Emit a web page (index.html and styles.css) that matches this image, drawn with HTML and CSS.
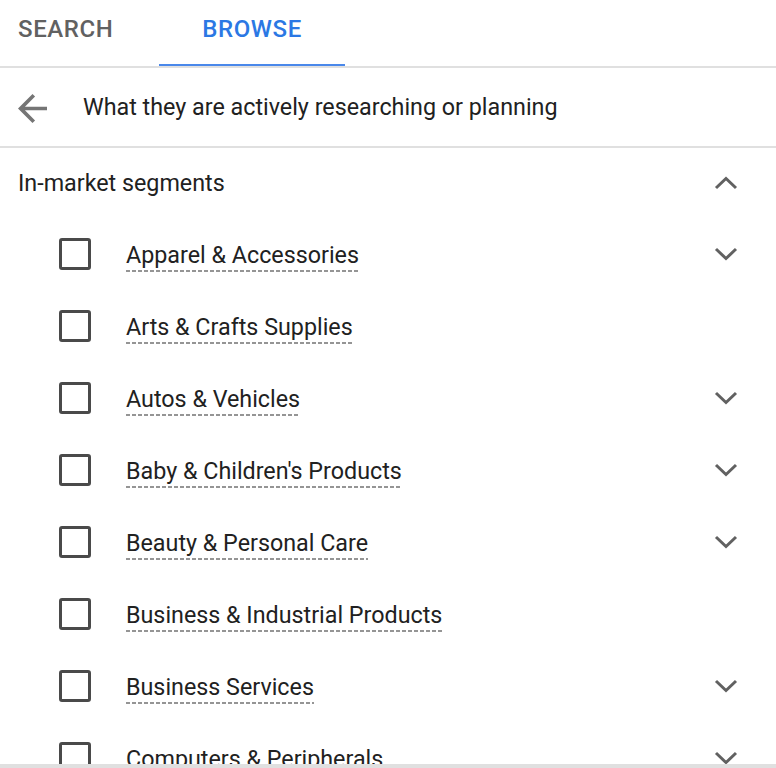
FILE: index.html
```html
<!DOCTYPE html>
<html>
<head>
<meta charset="utf-8">
<link rel="stylesheet" href="styles.css">
</head>
<body>
<div class="tabs">
  <div class="tab">SEARCH</div>
  <div class="tab tab-active">BROWSE</div>
</div>
<div class="back-row">
  <svg class="back-icon" viewBox="4 4 16 16" width="29" height="29"><path d="M20 11H7.83l5.59-5.59L12 4l-8 8 8 8 1.41-1.41L7.83 13H20v-2z" fill="#757575"/></svg>
  <span class="back-text">What they are actively researching or planning</span>
</div>
<div class="section-head">
  <span>In-market segments</span>
  <svg class="chev" viewBox="0 0 24 14" width="24" height="14"><polyline points="2,12 12,2.5 22,12" fill="none" stroke="#616161" stroke-width="3"/></svg>
</div>
<ul class="list">
  <li class="item"><span class="box"></span><span class="label">Apparel &amp; Accessories</span><svg class="chev" viewBox="0 0 24 14" width="24" height="14"><polyline points="2,2 12,11.5 22,2" fill="none" stroke="#616161" stroke-width="3"/></svg></li>
  <li class="item"><span class="box"></span><span class="label">Arts &amp; Crafts Supplies</span></li>
  <li class="item"><span class="box"></span><span class="label">Autos &amp; Vehicles</span><svg class="chev" viewBox="0 0 24 14" width="24" height="14"><polyline points="2,2 12,11.5 22,2" fill="none" stroke="#616161" stroke-width="3"/></svg></li>
  <li class="item"><span class="box"></span><span class="label">Baby &amp; Children's Products</span><svg class="chev" viewBox="0 0 24 14" width="24" height="14"><polyline points="2,2 12,11.5 22,2" fill="none" stroke="#616161" stroke-width="3"/></svg></li>
  <li class="item"><span class="box"></span><span class="label">Beauty &amp; Personal Care</span><svg class="chev" viewBox="0 0 24 14" width="24" height="14"><polyline points="2,2 12,11.5 22,2" fill="none" stroke="#616161" stroke-width="3"/></svg></li>
  <li class="item"><span class="box"></span><span class="label">Business &amp; Industrial Products</span></li>
  <li class="item"><span class="box"></span><span class="label">Business Services</span><svg class="chev" viewBox="0 0 24 14" width="24" height="14"><polyline points="2,2 12,11.5 22,2" fill="none" stroke="#616161" stroke-width="3"/></svg></li>
  <li class="item"><span class="box"></span><span class="label">Computers &amp; Peripherals</span><svg class="chev" viewBox="0 0 24 14" width="24" height="14"><polyline points="2,2 12,11.5 22,2" fill="none" stroke="#616161" stroke-width="3"/></svg></li>
</ul>
<div class="bottom-bar"></div>
</body>
</html>
```
FILE: styles.css
```css
html, body {
  margin: 0;
  padding: 0;
  background: #fff;
  height: 768px;
  overflow: hidden;
}
body {
  font-family: Roboto, "Liberation Sans", Arial, sans-serif;
  color: #212121;
  font-size: 23.3px;
}
.tabs {
  display: flex;
  height: 66px;
  border-bottom: 2px solid #e0e0e0;
}
.tab {
  display: flex;
  align-items: center;
  justify-content: center;
  font-size: 24px;
  font-weight: 500;
  color: #616161;
  letter-spacing: 0.6px;
  padding: 0 18px 8px;
  box-sizing: border-box;
}
.tab:first-child {
  width: 159px;
  justify-content: flex-start;
}
.tab-active {
  width: 186px;
  color: #2b78e4;
  border-bottom: 2px solid #4a88ea;
  padding-bottom: 6px;
}
.back-row {
  display: flex;
  align-items: center;
  height: 78px;
  border-bottom: 2px solid #e0e0e0;
  padding-left: 18px;
}
.back-icon {
  flex: none;
  margin-right: 36px;
  margin-top: 2px;
}
.back-text {
  color: #212121;
}
.section-head {
  display: flex;
  align-items: center;
  justify-content: space-between;
  height: 70px;
  padding: 0 38px 0 18px;
}
.list {
  list-style: none;
  margin: 0;
  padding: 0;
}
.item {
  display: flex;
  align-items: center;
  height: 72px;
  padding: 0 38px 0 59px;
}
.box {
  flex: none;
  width: 32px;
  height: 32px;
  box-sizing: border-box;
  border: 3px solid #4a4a4a;
  border-radius: 3px;
  margin-right: 35px;
}
.label {
  padding-bottom: 3px;
  margin-top: 5px;
  background-image: linear-gradient(to right, #959595 4px, transparent 4px);
  background-size: 6px 2px;
  background-repeat: repeat-x;
  background-position: 0 100%;
}
.item .chev {
  margin-left: auto;
}
.bottom-bar {
  position: fixed;
  left: 0;
  right: 0;
  bottom: 0;
  height: 4px;
  background: #e0e0e0;
}
```
